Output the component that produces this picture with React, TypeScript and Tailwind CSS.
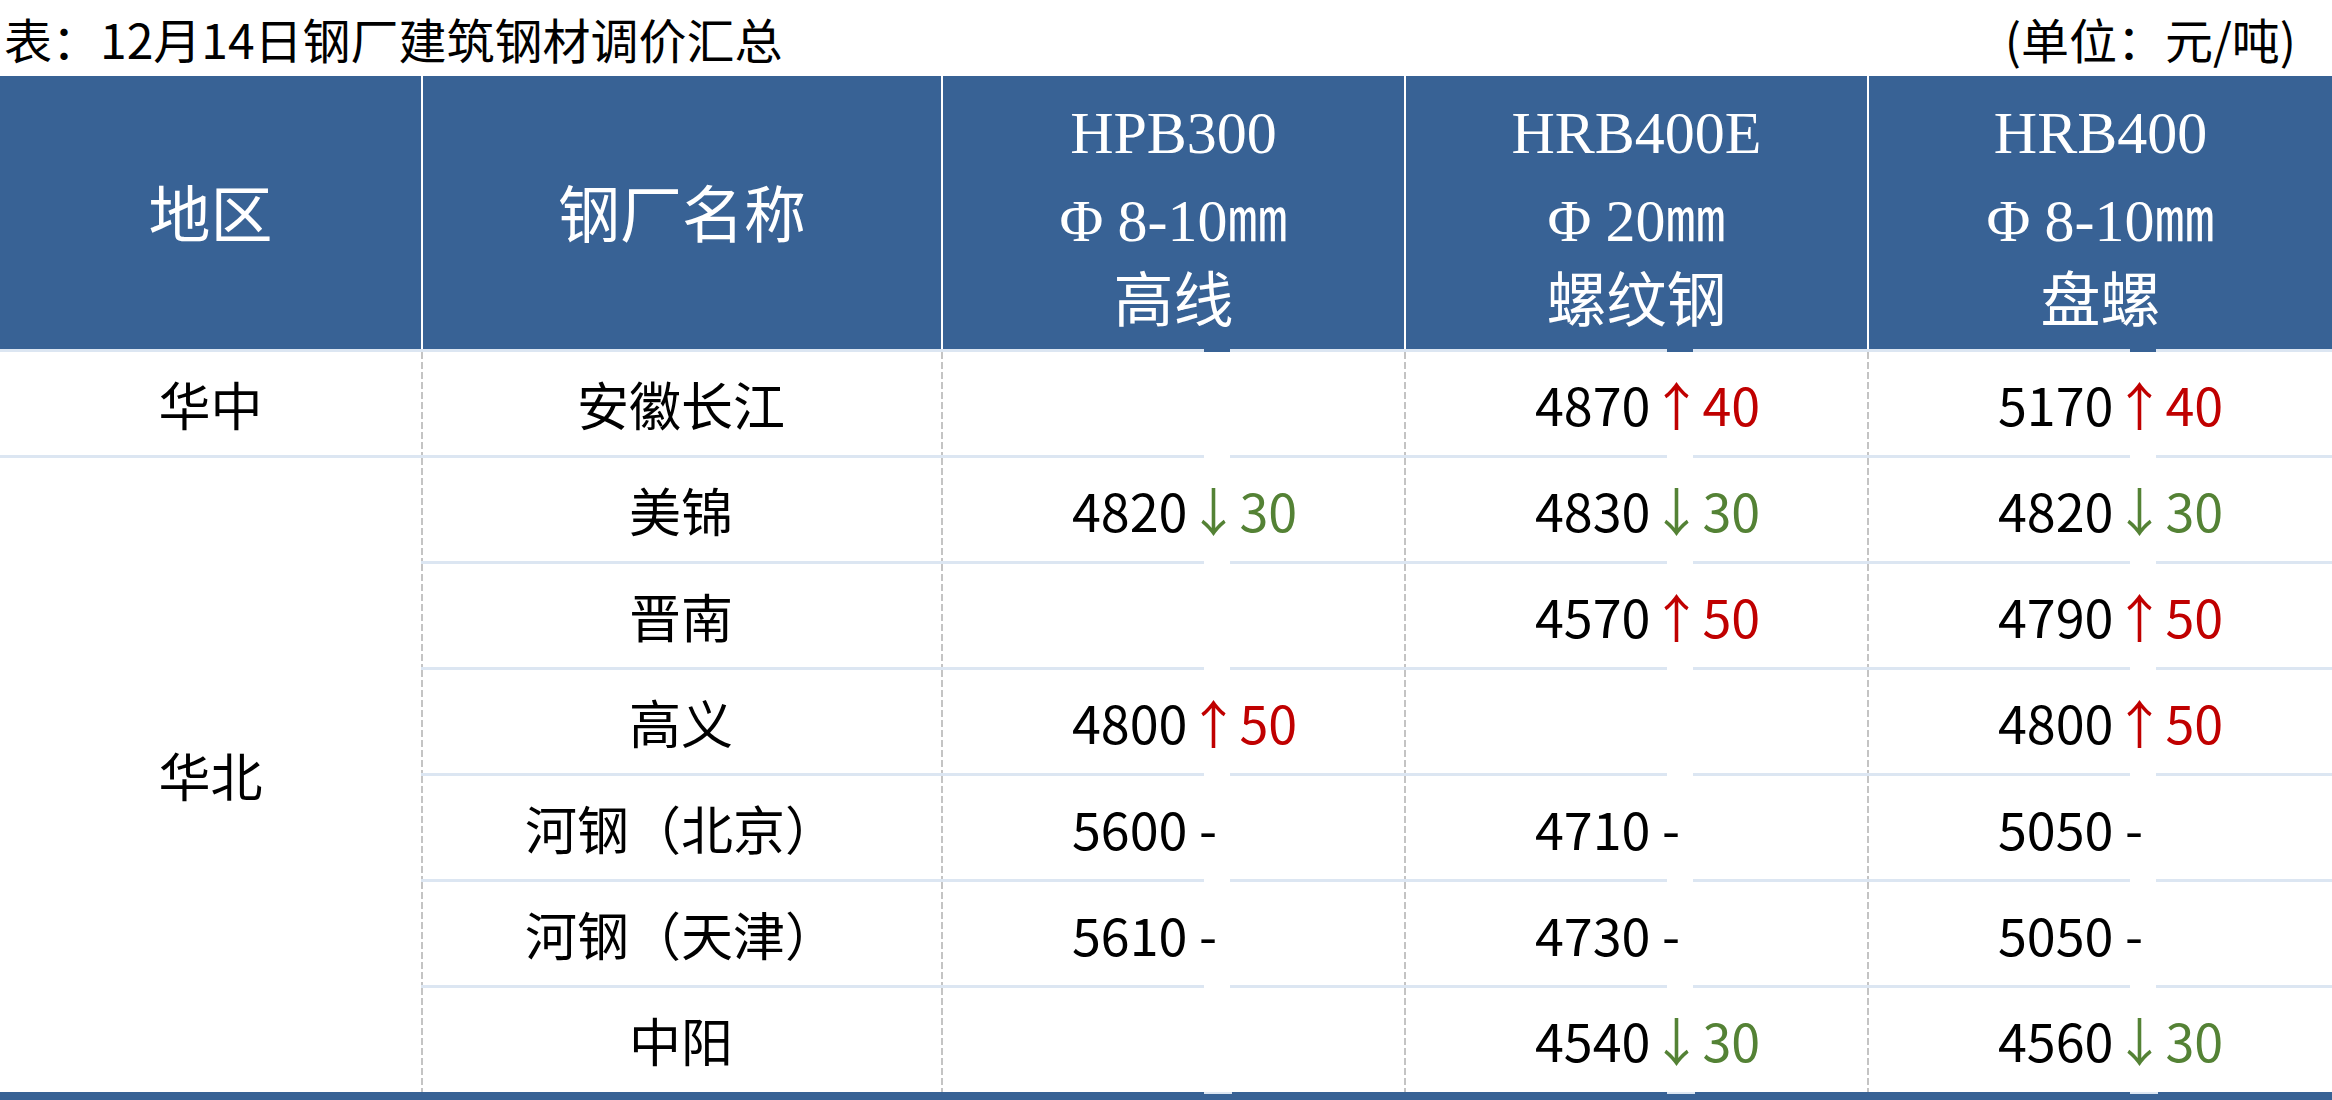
type Change = { price: string; dir: 'up' | 'down' | 'flat'; diff?: string } | null;

interface Row {
  name: string;
  cells: Change[];
}

const rows: Row[] = [
  { name: '安徽长江', cells: [null, { price: '4870', dir: 'up', diff: '40' }, { price: '5170', dir: 'up', diff: '40' }] },
  { name: '美锦', cells: [{ price: '4820', dir: 'down', diff: '30' }, { price: '4830', dir: 'down', diff: '30' }, { price: '4820', dir: 'down', diff: '30' }] },
  { name: '晋南', cells: [null, { price: '4570', dir: 'up', diff: '50' }, { price: '4790', dir: 'up', diff: '50' }] },
  { name: '高义', cells: [{ price: '4800', dir: 'up', diff: '50' }, null, { price: '4800', dir: 'up', diff: '50' }] },
  { name: '河钢（北京）', cells: [{ price: '5600', dir: 'flat' }, { price: '4710', dir: 'flat' }, { price: '5050', dir: 'flat' }] },
  { name: '河钢（天津）', cells: [{ price: '5610', dir: 'flat' }, { price: '4730', dir: 'flat' }, { price: '5050', dir: 'flat' }] },
  { name: '中阳', cells: [null, { price: '4540', dir: 'down', diff: '30' }, { price: '4560', dir: 'down', diff: '30' }] },
];

const specs = [
  { grade: 'HPB300', size: '8-10', kind: '高线' },
  { grade: 'HRB400E', size: '20', kind: '螺纹钢' },
  { grade: 'HRB400', size: '8-10', kind: '盘螺' },
];

const dashed =
  'bg-[repeating-linear-gradient(to_bottom,#c4c4c4_0_7px,transparent_7px_10px)] bg-no-repeat bg-[length:2px_100%]';

function Price({ value }: { value: Change }) {
  if (!value) return null;
  if (value.dir === 'flat') return <span>{value.price} -</span>;
  const up = value.dir === 'up';
  return (
    <span>
      {value.price}
      <span className={up ? 'text-[#c00000]' : 'text-[#548235]'}>
        {up ? '↑' : '↓'}
        {value.diff}
      </span>
    </span>
  );
}

export default function App() {
  return (
    <div className="w-[2332px] h-[1100px] bg-white overflow-hidden font-['Noto_Sans_CJK_SC',sans-serif] text-black">
      <div className="flex h-[76px] items-center justify-between pl-[4px] pr-[36px] text-[48px] leading-[76px]">
        <span>表：12月14日钢厂建筑钢材调价汇总</span>
        <span>(单位：元/吨)</span>
      </div>

      <div className="grid grid-cols-[421px_520px_463px_463px_465px] h-[276px] bg-[#386295] border-b-[3px] border-[#dce6f2] text-white font-['Liberation_Serif','Noto_Sans_CJK_SC',serif] text-[60px]">
        <div className="flex items-center justify-center pt-[10px] text-[62px]">地区</div>
        <div className="flex items-center justify-center pt-[10px] border-l-2 border-white text-[62px]">钢厂名称</div>
        {specs.map((s) => (
          <div key={s.grade} className="relative flex flex-col items-center justify-center pt-[10px] border-l-2 border-white leading-[81px]">
            <div>{s.grade}</div>
            <div>
              <span className="mr-[14px]">Φ</span>
              {s.size}
              <span className="font-['Noto_Sans_CJK_SC',sans-serif]">㎜</span>
            </div>
            <div>{s.kind}</div>
            <div className="absolute left-[261px] bottom-[-3px] w-[26px] h-[3px] bg-[#386295]" />
          </div>
        ))}
      </div>

      <div className="grid grid-cols-[421px_520px_463px_463px_465px] text-[52px]">
        {rows.map((r, i) => {
          const last = i === rows.length - 1;
          const rowCls = last ? 'h-[104px]' : 'h-[106px] border-b-[3px] border-[#dce6f2]';
          return [
            i === 0 ? (
              <div key="r0" className={`flex items-center justify-center ${rowCls}`}>华中</div>
            ) : i === 1 ? (
              <div key="r1" className="row-span-6 flex items-center justify-center">华北</div>
            ) : null,
            <div key={`n${i}`} className={`flex items-center justify-center ${dashed} ${rowCls}`}>
              {r.name}
            </div>,
            ...r.cells.map((c, j) => (
              <div key={`c${i}${j}`} className={`relative flex items-center pl-[131px] ${dashed} ${rowCls}`}>
                <Price value={c} />
                {!last && <div className="absolute left-[263px] bottom-[-3px] w-[26px] h-[3px] bg-white" />}
              </div>
            )),
          ];
        })}
      </div>

      <div className="grid grid-cols-[421px_520px_463px_463px_465px] h-2 bg-[#386295]">
        <div />
        <div />
        {specs.map((s) => (
          <div key={s.grade} className="relative">
            <div className="absolute left-[263px] top-0 w-[28px] h-[2px] bg-[#dce6f2]" />
          </div>
        ))}
      </div>
    </div>
  );
}
